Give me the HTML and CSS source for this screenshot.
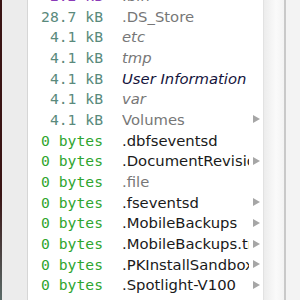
FILE: index.html
```html
<!DOCTYPE html>
<html lang="en">
<head>
  <meta charset="UTF-8" />
  <title>Disk Inventory</title>
  <link rel="stylesheet" href="styles.css">
</head>
<body>
  <div class="window">
    <div class="desk"></div>
    <div class="sidebar"></div>
    <div class="list">
      <div class="row"><span class="size purple">2.2 kB</span><span class="name dim">.bin</span></div>
      <div class="row"><span class="size">28.7 kB</span><span class="name dim">.DS_Store</span></div>
      <div class="row"><span class="size">4.1 kB</span><span class="name dim italic">etc</span></div>
      <div class="row"><span class="size">4.1 kB</span><span class="name dim italic">tmp</span></div>
      <div class="row"><span class="size">4.1 kB</span><span class="name navy italic">User Information</span></div>
      <div class="row"><span class="size">4.1 kB</span><span class="name dim italic">var</span></div>
      <div class="row"><span class="size">4.1 kB</span><span class="name dim">Volumes</span><span class="arrow"></span></div>
      <div class="row"><span class="size zero">0 bytes</span><span class="name">.dbfseventsd</span></div>
      <div class="row"><span class="size zero">0 bytes</span><span class="name">.DocumentRevisions-V100</span><span class="arrow"></span></div>
      <div class="row"><span class="size zero">0 bytes</span><span class="name dim">.file</span></div>
      <div class="row"><span class="size zero">0 bytes</span><span class="name">.fseventsd</span><span class="arrow"></span></div>
      <div class="row"><span class="size zero">0 bytes</span><span class="name">.MobileBackups</span><span class="arrow"></span></div>
      <div class="row"><span class="size zero">0 bytes</span><span class="name">.MobileBackups.trash</span><span class="arrow"></span></div>
      <div class="row"><span class="size zero">0 bytes</span><span class="name">.PKInstallSandboxManager</span><span class="arrow"></span></div>
      <div class="row"><span class="size zero">0 bytes</span><span class="name">.Spotlight-V100</span><span class="arrow"></span></div>
    </div>
    <div class="scroll"></div>
    <div class="edge"></div>
  </div>
</body>
</html>
```

FILE: styles.css
```css
body {
  margin: 0;
  background: #fff;
}

.window {
  display: flex;
  height: 300px;
  overflow: hidden;
}

.desk {
  width: 2px;
  background: linear-gradient(#3a1414 65%, #5a6a68);
}

.sidebar {
  width: 25px;
  background: #ececec;
  border-right: 1px solid #d6d6d6;
}

.list {
  flex: 1;
  margin-top: -15px;
  min-width: 0;
}

.row {
  display: flex;
  align-items: center;
  height: 20.7px;
}

.size {
  width: 75px;
  flex: none;
  text-align: right;
  font-family: "DejaVu Sans Mono", monospace;
  font-size: 14.7px;
  color: #5a8a7c;
}

.size.zero {
  color: #2fa52f;
}

.size.purple {
  color: #8a3ab8;
}

.name {
  flex: none;
  width: 127px;
  margin-left: 19px;
  overflow: hidden;
  white-space: nowrap;
  font-family: "DejaVu Sans", sans-serif;
  font-size: 14.8px;
  color: #1a1a1a;
}

.name.dim {
  color: #777;
}

.name.navy {
  color: #14143c;
}

.italic {
  font-style: italic;
}

.arrow {
  margin-left: 4px;
  width: 0;
  height: 0;
  border-top: 4px solid transparent;
  border-bottom: 4px solid transparent;
  border-left: 7px solid #a6a6a6;
}

.scroll {
  width: 20px;
  background: linear-gradient(to right, #ececec, #fafafa 60%, #f3f3f3);
  border-left: 1px solid #e2e2e2;
  border-right: 2px solid #c9c9c9;
}

.edge {
  width: 14px;
  background: #f3f3f3;
}
```
